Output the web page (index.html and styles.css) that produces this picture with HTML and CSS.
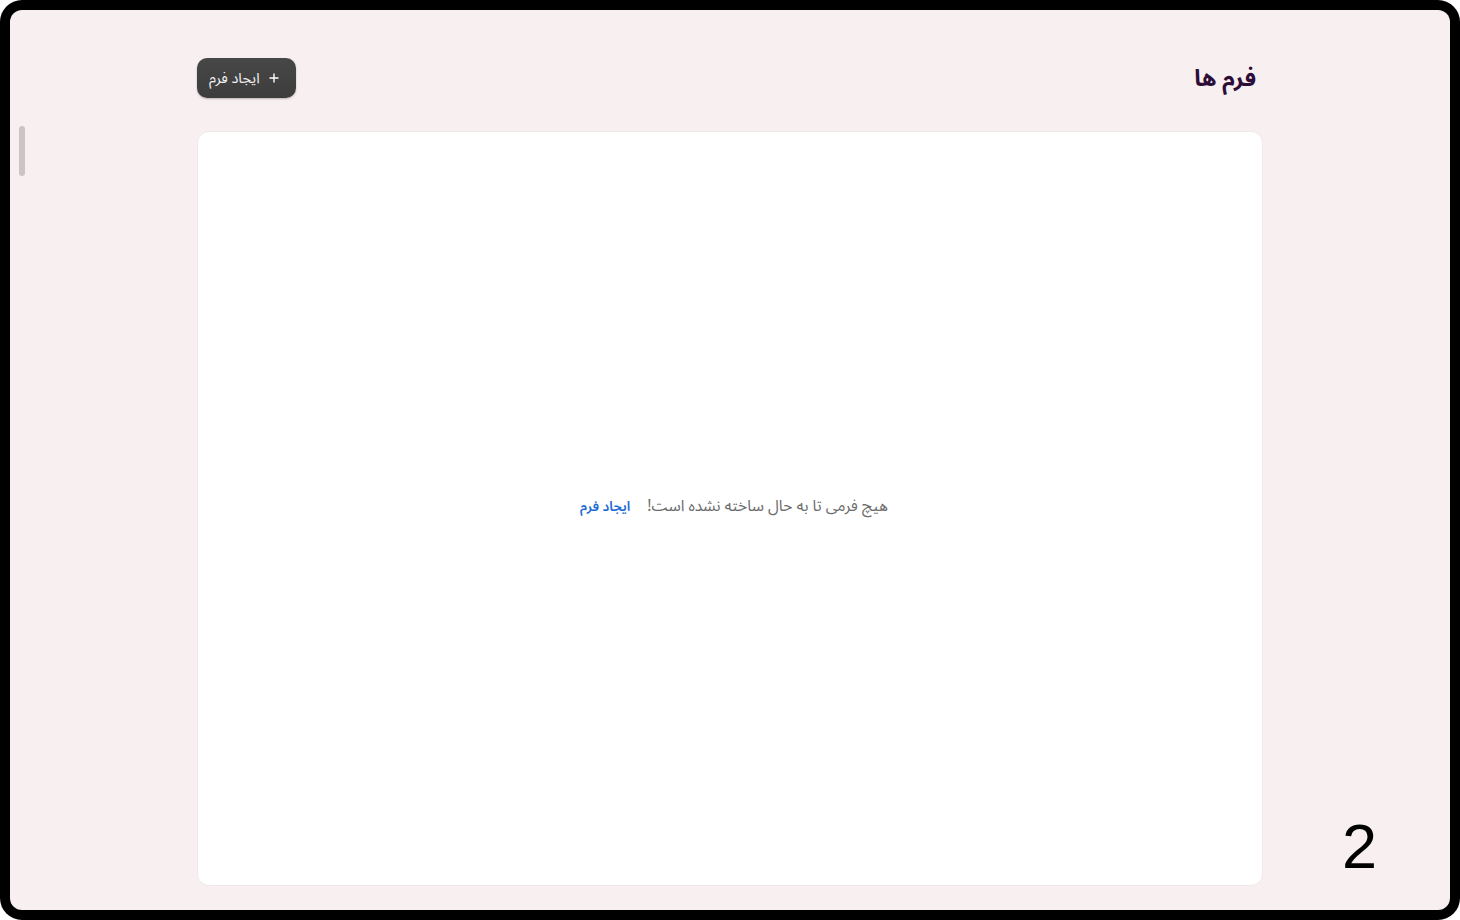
FILE: index.html
```html
<!DOCTYPE html>
<html lang="fa" dir="rtl">
<head>
<meta charset="utf-8">
<title>فرم ها</title>
<link rel="stylesheet" href="styles.css">
</head>
<body>
<div class="frame">
  <div class="screen">
    <div class="scroll-thumb"></div>
    <main class="content">
      <header class="page-header">
        <h1 class="page-title">فرم ها</h1>
        <button class="btn-create" type="button">
          <svg class="plus" width="10" height="10" viewBox="0 0 10 10" aria-hidden="true"><path d="M5 0.5v9M0.5 5h9" stroke="#fff" stroke-width="1.4" fill="none"/></svg>
          <span>ایجاد فرم</span>
        </button>
      </header>
      <section class="card">
        <p class="empty">
          <span class="empty-text">هیچ فرمی تا به حال ساخته نشده است!</span>
          <a class="empty-link" href="#">ایجاد فرم</a>
        </p>
      </section>
    </main>
    <div class="page-num">2</div>
  </div>
</div>
</body>
</html>
```
FILE: styles.css
```css
* { box-sizing: border-box; }
html, body { margin: 0; padding: 0; background: #fff; }
body { font-family: "Noto Sans Arabic", "DejaVu Sans", "Noto Sans", sans-serif; }
.frame {
  width: 1460px;
  height: 920px;
  background: #000;
  border-radius: 22px;
  padding: 10px;
}
.screen {
  position: relative;
  width: 100%;
  height: 100%;
  background: #f7eff0;
  border-radius: 12px;
  display: flex;
  justify-content: center;
  padding-top: 48px;
}
.scroll-thumb {
  position: absolute;
  left: 9px;
  top: 116px;
  width: 6px;
  height: 50px;
  border-radius: 3px;
  background: #c9c5c6;
}
.content {
  width: 1066px;
  display: flex;
  flex-direction: column;
}
.page-header {
  display: flex;
  justify-content: space-between;
  align-items: center;
  height: 40px;
  padding-right: 7px;
}
.page-title {
  margin: 0;
  font-size: 23px;
  font-weight: 700;
  color: #2c0d37;
}
.btn-create {
  display: flex;
  align-items: center;
  gap: 9px;
  height: 40px;
  padding: 0 17px 0 12px;
  border: none;
  border-radius: 10px;
  background: linear-gradient(#474747, #3d3d3d);
  box-shadow: 0 1px 2px rgba(0,0,0,0.25);
  color: #f2f2f2;
  font-family: inherit;
  font-size: 14.5px;
}
.plus { display: block; }
.card {
  margin-top: 33px;
  height: 755px;
  background: #fff;
  border: 1px solid #efe9ea;
  border-radius: 12px;
  display: flex;
  align-items: center;
  justify-content: center;
  padding: 0 0 4px 8px;
}
.empty {
  margin: 0;
  display: flex;
  align-items: center;
  gap: 17px;
  font-size: 15.6px;
}
.empty-text { color: #6b6b6b; }
.empty-link {
  color: #1b6ad3;
  text-decoration: none;
  font-size: 13.5px;
  font-weight: 600;
}
.page-num {
  position: absolute;
  right: 73px;
  bottom: 32px;
  font-family: "Liberation Sans", Arial, sans-serif;
  font-size: 63px;
  line-height: 1;
  color: #000;
}
```
